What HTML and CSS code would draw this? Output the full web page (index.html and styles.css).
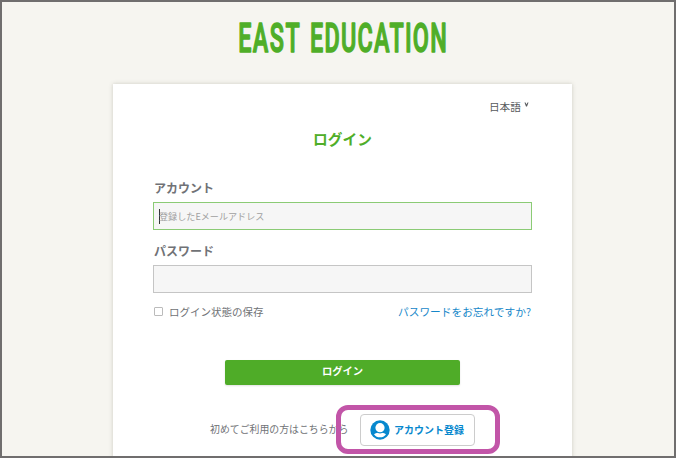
FILE: index.html
```html
<!DOCTYPE html>
<html lang="ja">
<head>
<meta charset="utf-8">
<title>EAST EDUCATION</title>
<link rel="stylesheet" href="styles.css">
</head>
<body>
<div class="page">
  <header class="brand">
    <svg class="logo" width="212" height="38" viewBox="0 0 212 38" role="img">
      <g transform="scale(.57 1)">
        <text x="2" y="33" textLength="108">EAST</text>
        <text x="128" y="33" textLength="240">EDUCATION</text>
      </g>
    </svg>
  </header>
  <main class="card">
    <div class="language"><span>日本語</span><svg width="5" height="5" viewBox="0 0 5 5"><path d="M.5.5h1l1 2 1-2h1L3 4.500H2z"/></svg></div>
    <h1 class="title">ログイン</h1>
    <form class="form">
      <label class="label">アカウント</label>
      <div class="field field-active"><span class="caret"></span><span class="placeholder">登録したEメールアドレス</span></div>
      <label class="label label-password">パスワード</label>
      <div class="field"></div>
      <div class="options">
        <label class="remember"><span class="checkbox"></span><span>ログイン状態の保存</span></label>
        <a class="forgot">パスワードをお忘れですか?</a>
      </div>
      <div class="submit">ログイン</div>
    </form>
    <div class="register">
      <span class="first-time">初めてご利用の方はこちらから</span>
      <a class="signup">
        <svg width="20" height="20" viewBox="0 0 20 20"><circle cx="10" cy="10" r="9.700" fill="#0788ce"/><path d="M4 14.200C5.600 13 7.500 12.500 10 12.500s4.400.5 6 1.700C14.300 16.500 12.500 17.300 10 17.300s-4.300-.8-6-3.100z" fill="#fff"/><circle cx="10" cy="8" r="5.400" fill="#0788ce"/><circle cx="10" cy="7.700" r="4.600" fill="#fff"/></svg>
        <span>アカウント登録</span>
      </a>
      <div class="highlight"></div>
    </div>
  </main>
</div>
</body>
</html>
```
FILE: styles.css
```css
* { box-sizing: border-box; }
body {
  margin: 0;
  font-family: "Noto Sans CJK JP", sans-serif;
  color: #707276;
}
.page {
  height: 458px;
  overflow: hidden;
  border: 2px solid #706e6e;
  background: #f6f5f0;
}
.brand {
  height: 82px;
  padding: 17px 0 0 235px;
}
.logo {
  display: block;
  overflow: visible;
  font: 500 41px Roboto, sans-serif;
  fill: #4fae28;
  stroke: #4fae28;
  stroke-width: 1.5;
  stroke-linejoin: round;
}
.card {
  width: 459px;
  height: 390px;
  margin-left: 111px;
  padding: 13px 40px 0;
  background: #fff;
  box-shadow: 0 0 4px rgba(80, 80, 60, .25);
}
.language {
  display: flex;
  justify-content: flex-end;
  gap: 3px;
  height: 20px;
  padding-right: 3px;
  font-size: 10.7px;
  line-height: 20px;
  color: #56585c;
}
.language svg { margin-top: 5px; fill: #56585c; }
.title {
  height: 24px;
  margin: 10px 0 0;
  font-size: 14.7px;
  line-height: 24px;
  text-align: center;
  color: #4fae28;
}
.form { margin-top: 27px; }
.label {
  display: block;
  height: 20px;
  font-size: 12px;
  font-weight: 700;
  line-height: 20px;
  padding-left: 1px;
}
.label-password { margin-top: 11px; }
.field {
  display: flex;
  align-items: center;
  height: 28px;
  margin-top: 4px;
  padding-left: 5px;
  border: 1px solid #c5c5c5;
  background: #f6f6f6;
}
.field-active { border-color: #8bcb75; }
.caret { width: 1px; height: 15px; background: #333; }
.placeholder {
  margin-left: -1px;
  font-size: 9.100px;
  color: #a0a0a0;
}
.options {
  display: flex;
  justify-content: space-between;
  height: 20px;
  margin-top: 9px;
  font-size: 10.5px;
  line-height: 20px;
}
.remember { display: flex; align-items: center; gap: 6px; }
.checkbox {
  width: 9px;
  height: 9px;
  margin: -1px 0 0 1px;
  border: 1px solid #bbb;
  border-radius: 1px;
}
.forgot { margin-right: 1px; font-size: 10.7px; color: #1687c9; }
.submit {
  width: 235px;
  height: 25px;
  margin: 38px 0 0 72px;
  border-radius: 2px;
  background: #4fac28;
  box-shadow: 0 1px 2px rgba(0, 0, 0, .12);
  font-size: 10.3px;
  font-weight: 700;
  line-height: 22px;
  text-align: center;
  color: #fff;
}
.register {
  position: relative;
  display: flex;
  align-items: center;
  height: 32px;
  margin: 29px 0 0 57px;
}
.first-time {
  width: 150px;
  padding-bottom: 2px;
  font-size: 9.900px;
  white-space: nowrap;
}
.signup {
  display: flex;
  align-items: center;
  gap: 4px;
  width: 115px;
  height: 32px;
  padding-left: 9px;
  border: 1px solid #ccc;
  border-radius: 4px;
  background: #fff;
  font-size: 10px;
  font-weight: 700;
  white-space: nowrap;
  color: #0788ce;
}
.signup span { padding-bottom: 2px; }
.signup svg { flex: none; }
.highlight {
  position: absolute;
  top: -9px;
  left: 126px;
  width: 164px;
  height: 49px;
  border: 5px solid #c255a8;
  border-radius: 12px;
}
```
